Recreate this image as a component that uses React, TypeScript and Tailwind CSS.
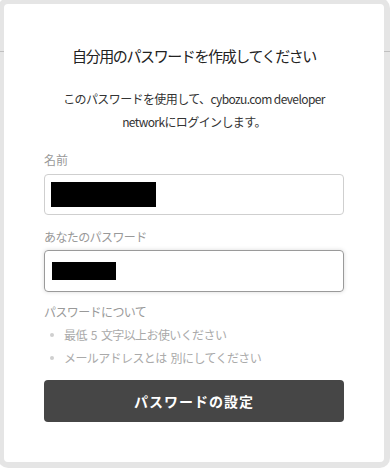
import React from "react";

const jp = { fontFamily: '"Noto Sans CJK JP", "Noto Sans", sans-serif' };

export default function App() {
  return (
    <div className="relative w-[390px] h-[472px] bg-white overflow-hidden" style={jp}>
      <div className="h-[52px] border-b border-[#d6d6d6]" />
      <div className="absolute left-[-2px] top-[-2px] w-[392px] h-[470px] border-[6px] border-[rgba(0,0,0,0.1)] rounded-[10px] bg-white bg-clip-padding">
        <div className="px-[40px] pt-[42px] flex flex-col">
          <h1 className="text-center text-[15px] leading-[20px] tracking-[-1.4px] text-[#222] font-normal">
            自分用のパスワードを作成してください
          </h1>
          <p className="mt-[21px] text-center text-[12px] leading-[23px] text-[#333] tracking-[-0.6px]">
            このパスワードを使用して、cybozu.com developer
            <br />
            networkにログインします。
          </p>
          <label className="mt-[18px] text-[12px] leading-[18px] text-[#999]">名前</label>
          <div className="mt-[5px] h-[41px] rounded-[4px] border border-[#cfcfcf] flex items-center pl-[6px]">
            <div className="w-[105px] h-[25px] bg-black" />
          </div>
          <label className="mt-[13px] text-[12px] leading-[18px] text-[#999] tracking-[-0.6px]">あなたのパスワード</label>
          <div className="mt-[4px] h-[42px] rounded-[4px] border border-[#9a9a9a] shadow-[0_0_4px_rgba(0,0,0,0.15)] flex items-center pl-[7px]">
            <div className="w-[64px] h-[18px] bg-black" />
          </div>
          <div className="mt-[8px] text-[12px] leading-[23px] text-[#999] tracking-[-0.6px]">パスワードについて</div>
          <ul className="text-[12px] leading-[23px] text-[#aaa] tracking-[-0.6px]">
            <li className="flex items-center">
              <span className="w-[4px] h-[4px] rounded-full bg-[#cfcfcf] ml-[6px] mr-[10px]" />
              最低<span className="mx-[4px]">5</span>文字以上お使いください
            </li>
            <li className="flex items-center">
              <span className="w-[4px] h-[4px] rounded-full bg-[#cfcfcf] ml-[6px] mr-[10px]" />
              メールアドレスとは<span className="ml-[4px]">別にしてください</span>
            </li>
          </ul>
          <button className="mt-[11px] h-[42px] rounded-[4px] bg-[#464646] text-white text-[14px] font-bold tracking-[1px]">
            パスワードの設定
          </button>
        </div>
      </div>
    </div>
  );
}
